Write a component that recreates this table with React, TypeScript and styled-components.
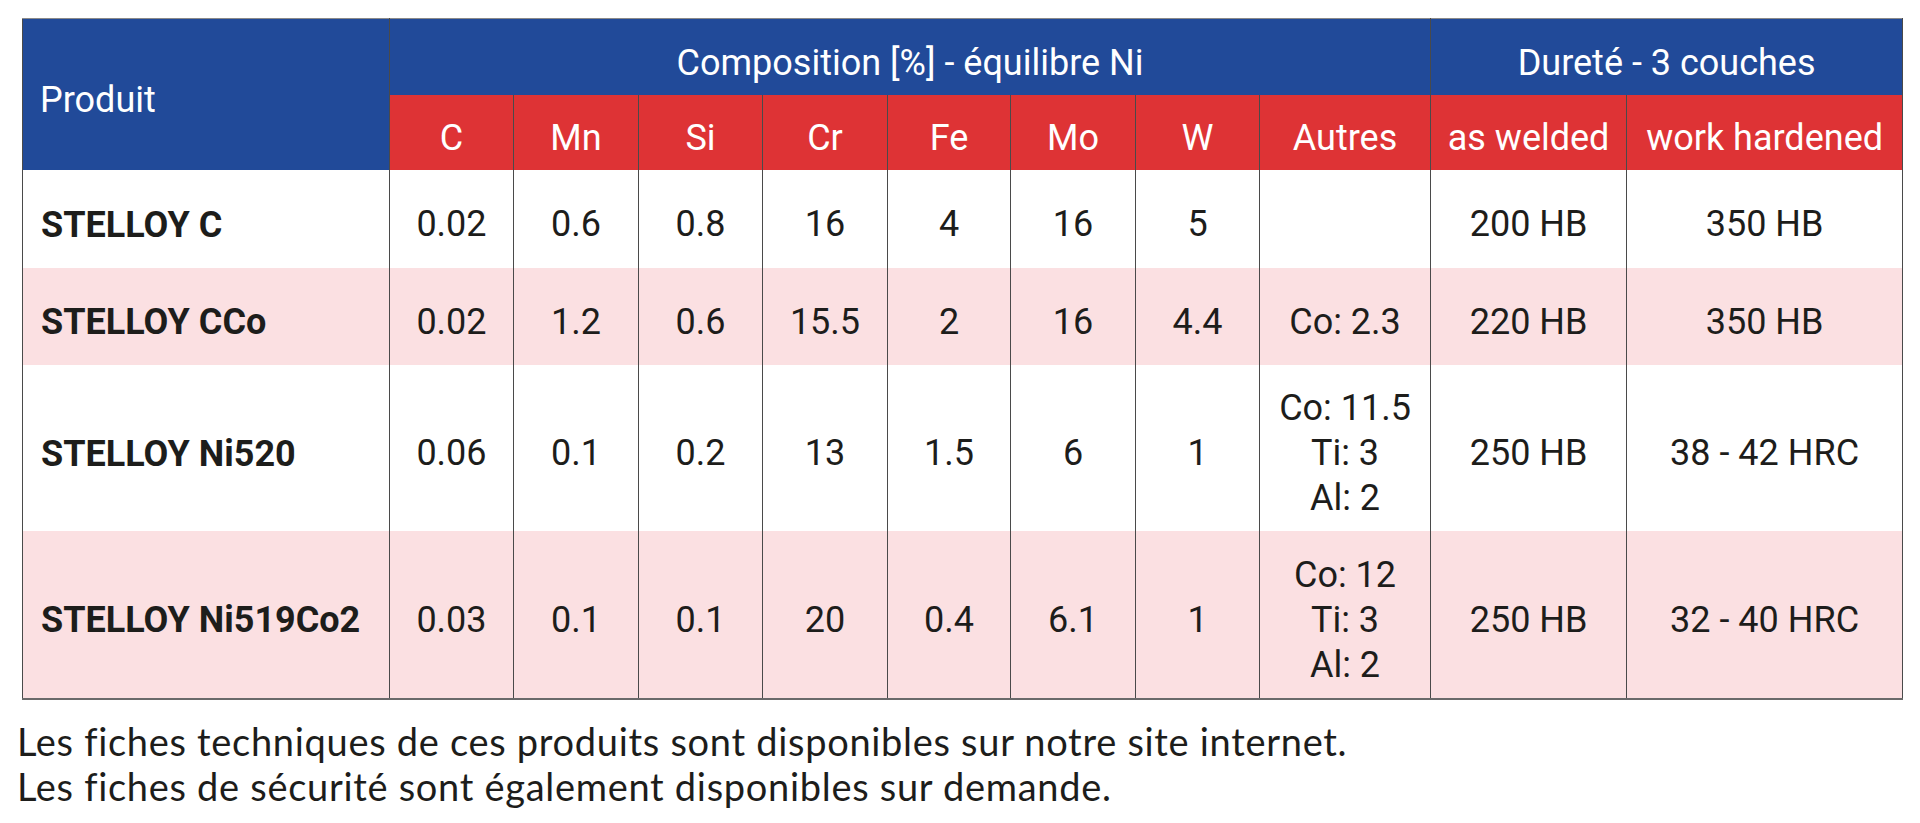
import { FC } from 'react';
import styled, { createGlobalStyle } from 'styled-components';

const GlobalStyle = createGlobalStyle`
	html, body {
		margin: 0;
		padding: 0;
		background: #ffffff;
	}
	body {
		font-family: Roboto, "Liberation Sans", sans-serif;
		color: #1d1d1b;
	}
`;

const BLUE = '#214a99';
const RED = '#de3335';
const PINK = '#fbe0e2';
const LINE = '#4a4a4a';

interface IRow {
	name: string;
	values: string[];
	autres: string[];
	welded: string;
	hardened: string;
	height: number;
}

const elements = ['C', 'Mn', 'Si', 'Cr', 'Fe', 'Mo', 'W', 'Autres'];
const widths = [367, 124, 125, 124, 125, 123, 125, 124, 171, 196, 276];

const rows: IRow[] = [
	{ name: 'STELLOY C', values: ['0.02', '0.6', '0.8', '16', '4', '16', '5'], autres: [], welded: '200 HB', hardened: '350 HB', height: 98 },
	{ name: 'STELLOY CCo', values: ['0.02', '1.2', '0.6', '15.5', '2', '16', '4.4'], autres: ['Co: 2.3'], welded: '220 HB', hardened: '350 HB', height: 97 },
	{ name: 'STELLOY Ni520', values: ['0.06', '0.1', '0.2', '13', '1.5', '6', '1'], autres: ['Co: 11.5', 'Ti: 3', 'Al: 2'], welded: '250 HB', hardened: '38 - 42 HRC', height: 166 },
	{ name: 'STELLOY Ni519Co2', values: ['0.03', '0.1', '0.1', '20', '0.4', '6.1', '1'], autres: ['Co: 12', 'Ti: 3', 'Al: 2'], welded: '250 HB', hardened: '32 - 40 HRC', height: 168 },
];

const Page = styled.div`
	padding: 18px 18px 0 22px;
`;

const Table = styled.table`
	width: 1880px;
	table-layout: fixed;
	border-collapse: collapse;
	border-top: 1px solid #8a8a8a;
	border-bottom: 2px solid #6a6a6a;
	border-left: 1px solid ${LINE};
	border-right: 1px solid ${LINE};
	font-size: 36px;
`;

const HeadRow = styled.tr<{ $height: number }>`
	height: ${(p) => p.$height}px;
`;

const GroupHead = styled.th`
	padding: 12px 0 0;
	background: ${BLUE};
	color: #ffffff;
	font-weight: 400;
	text-align: center;
	border-left: 1px solid ${LINE};
	white-space: nowrap;
`;

const ProductHead = styled.th`
	padding: 12px 0 0 17px;
	background: ${BLUE};
	color: #ffffff;
	font-weight: 400;
	text-align: left;
`;

const SubHead = styled.th`
	padding: 12px 0 0;
	background: ${RED};
	color: #ffffff;
	font-weight: 400;
	text-align: center;
	border-left: 1px solid ${LINE};
	white-space: nowrap;
`;

const BodyRow = styled.tr<{ $shaded: boolean; $height: number }>`
	height: ${(p) => p.$height}px;
	background: ${(p) => (p.$shaded ? PINK : '#ffffff')};
`;

const NameCell = styled.td`
	padding: 12px 0 0 18px;
	font-weight: 700;
	white-space: nowrap;
`;

const Cell = styled.td`
	padding: 12px 0 0;
	text-align: center;
	border-left: 1px solid ${LINE};
	white-space: nowrap;
	line-height: 45px;
`;

const Notes = styled.div`
	margin: 19px 0 0 -5px;
	font-family: Lato, "Open Sans", sans-serif;
	font-size: 38px;
	letter-spacing: 0.7px;
	line-height: 45.6px;
	color: #1d1d1b;
`;

const NoteLine = styled.p`
	margin: 0;
`;

const App: FC = () => {
	return (
		<Page>
			<GlobalStyle />
			<Table>
				<colgroup>
					{widths.map((w, i) => (
						<col key={i} style={{ width: w }} />
					))}
				</colgroup>
				<thead>
					<HeadRow $height={76}>
						<ProductHead rowSpan={2}>Produit</ProductHead>
						<GroupHead colSpan={8}>Composition [%] - équilibre Ni</GroupHead>
						<GroupHead colSpan={2}>Dureté - 3 couches</GroupHead>
					</HeadRow>
					<HeadRow $height={75}>
						{elements.map((el) => (
							<SubHead key={el}>{el}</SubHead>
						))}
						<SubHead>as welded</SubHead>
						<SubHead>work hardened</SubHead>
					</HeadRow>
				</thead>
				<tbody>
					{rows.map((row, i) => (
						<BodyRow key={row.name} $shaded={i % 2 === 1} $height={row.height}>
							<NameCell>{row.name}</NameCell>
							{row.values.map((v, j) => (
								<Cell key={j}>{v}</Cell>
							))}
							<Cell>
								{row.autres.map((a) => (
									<div key={a}>{a}</div>
								))}
							</Cell>
							<Cell>{row.welded}</Cell>
							<Cell>{row.hardened}</Cell>
						</BodyRow>
					))}
				</tbody>
			</Table>
			<Notes>
				<NoteLine>Les fiches techniques de ces produits sont disponibles sur notre site internet.</NoteLine>
				<NoteLine>Les fiches de sécurité sont également disponibles sur demande.</NoteLine>
			</Notes>
		</Page>
	);
};

export default App;
